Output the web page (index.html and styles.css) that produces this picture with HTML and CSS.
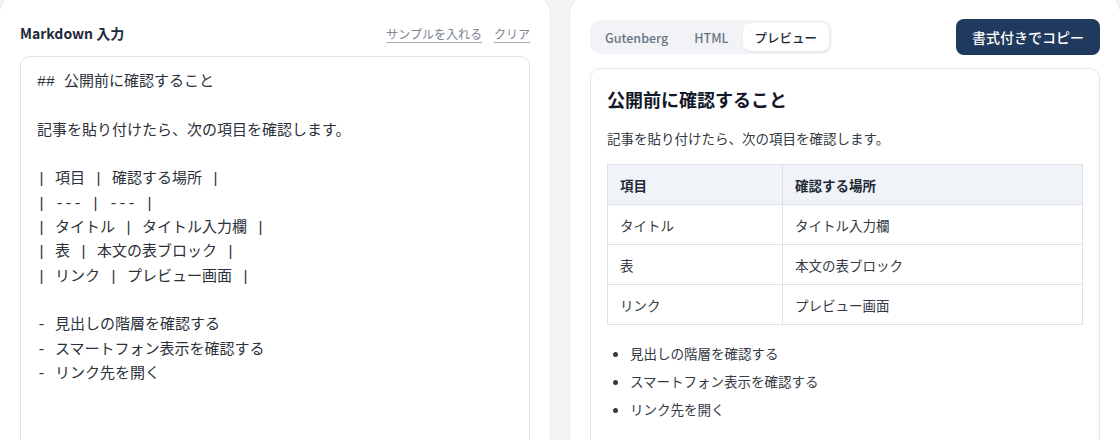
FILE: index.html
```html
<!DOCTYPE html>
<html lang="ja">
<head>
<meta charset="utf-8">
<title>Markdown 変換</title>
<link rel="stylesheet" href="styles.css">
</head>
<body>
<div class="app">
  <section class="card">
    <div class="card-head">
      <h1 class="label">Markdown 入力</h1>
      <div class="links">
        <a class="link" href="#">サンプルを入れる</a>
        <a class="link" href="#">クリア</a>
      </div>
    </div>
    <textarea class="editor" spellcheck="false">## 公開前に確認すること

記事を貼り付けたら、次の項目を確認します。

| 項目 | 確認する場所 |
| --- | --- |
| タイトル | タイトル入力欄 |
| 表 | 本文の表ブロック |
| リンク | プレビュー画面 |

- 見出しの階層を確認する
- スマートフォン表示を確認する
- リンク先を開く</textarea>
  </section>
  <section class="card">
    <div class="card-head tall">
      <div class="tabs">
        <button class="tab">Gutenberg</button>
        <button class="tab">HTML</button>
        <button class="tab active">プレビュー</button>
      </div>
      <button class="copy">書式付きでコピー</button>
    </div>
    <div class="preview">
      <h2 class="p-title">公開前に確認すること</h2>
      <p class="p-text">記事を貼り付けたら、次の項目を確認します。</p>
      <table class="p-table">
        <thead>
          <tr><th class="col1">項目</th><th>確認する場所</th></tr>
        </thead>
        <tbody>
          <tr><td>タイトル</td><td>タイトル入力欄</td></tr>
          <tr><td>表</td><td>本文の表ブロック</td></tr>
          <tr><td>リンク</td><td>プレビュー画面</td></tr>
        </tbody>
      </table>
      <ul class="p-list">
        <li>見出しの階層を確認する</li>
        <li>スマートフォン表示を確認する</li>
        <li>リンク先を開く</li>
      </ul>
    </div>
  </section>
</div>
</body>
</html>
```
FILE: styles.css
```css
* { box-sizing: border-box; }
html, body {
  margin: 0;
  padding: 0;
  background: #f4f5f7;
  font-family: "Noto Sans CJK JP", "Noto Sans", sans-serif;
  color: #1f2937;
  overflow: hidden;
}
.app {
  display: grid;
  grid-template-columns: 552px 552px;
  column-gap: 18px;
  margin: -4px 0 0 -1px;
}
.card {
  background: #ffffff;
  border: 1px solid #e6e8ec;
  border-radius: 16px;
  padding: 21px 20px 0;
  height: 470px;
  box-shadow: 0 1px 2px rgba(15, 23, 42, 0.03);
}
.card-head {
  display: flex;
  align-items: center;
  justify-content: space-between;
  height: 30px;
  margin-bottom: 8px;
}
.card-head.tall {
  height: 38px;
  margin-bottom: 12px;
}
.label {
  margin: 0;
  font-size: 14px;
  font-weight: 700;
  color: #1e293b;
}
.links {
  display: flex;
  gap: 12px;
}
.link {
  font-size: 12px;
  color: #7b8594;
  text-decoration: underline;
  text-underline-offset: 3px;
  text-decoration-color: #a4acb8;
}
.editor {
  display: block;
  width: 100%;
  height: 420px;
  margin: 0;
  border: 1px solid #dfe3e8;
  border-radius: 10px;
  padding: 14px 16px 10px;
  resize: none;
  font-family: "Liberation Mono", "Noto Sans CJK JP", monospace;
  font-size: 15px;
  line-height: 24.35px;
  color: #2b313a;
  background: #fff;
  outline: none;
}
.tabs {
  display: flex;
  gap: 2px;
  padding: 3px;
  background: #f1f3f6;
  border-radius: 10px;
}
.tab {
  height: 28px;
  padding: 0 12px;
  border: 0;
  border-radius: 7px;
  background: transparent;
  font-family: "Noto Sans CJK JP", "Noto Sans", sans-serif;
  font-size: 12.5px;
  font-weight: 500;
  color: #6b7684;
}
.tab.active {
  background: #ffffff;
  color: #1e293b;
  box-shadow: 0 1px 2px rgba(15, 23, 42, 0.08);
}
.copy {
  height: 36px;
  padding: 0 16px;
  border: 0;
  border-radius: 8px;
  background: #1f3a5c;
  color: #ffffff;
  font-family: "Noto Sans CJK JP", "Noto Sans", sans-serif;
  font-size: 14px;
  font-weight: 500;
}
.preview {
  border: 1px solid #e3e6ea;
  border-radius: 10px;
  padding: 17px 16px;
  height: 420px;
}
.p-title {
  margin: 0 0 15px;
  font-size: 18px;
  line-height: 26px;
  font-weight: 700;
  color: #111827;
}
.p-text {
  margin: 0 0 15px;
  font-size: 13.5px;
  line-height: 22px;
  color: #333a44;
}
.p-table {
  width: 100%;
  border-collapse: collapse;
  font-size: 13.5px;
  color: #333a44;
}
.p-table th,
.p-table td {
  height: 40px;
  padding: 0 12px;
  border: 1px solid #dde2e8;
  text-align: left;
  vertical-align: middle;
}
.p-table th {
  background: #f0f4f8;
  font-weight: 700;
  color: #1f2937;
}
.col1 { width: 175px; }
.p-list {
  margin: 14px 0 0;
  padding-left: 23px;
  font-size: 13.5px;
  line-height: 28px;
  color: #333a44;
}
```
